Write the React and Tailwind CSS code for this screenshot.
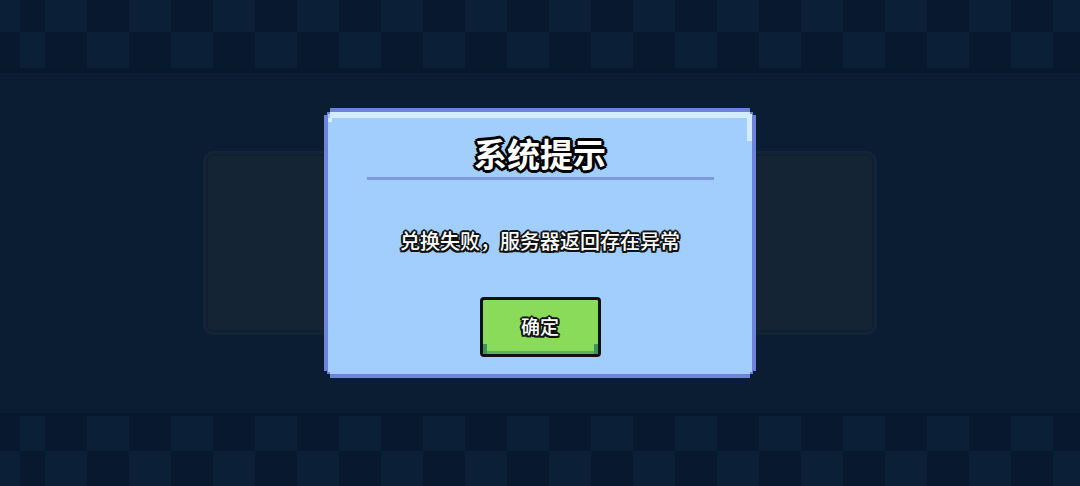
import React from "react";

const LIGHT = "bg-[#0b2037]";
const DARK = "bg-[#08182e]";

// column widths of the checker strip (first two are partial)
const cols = [20, 25, ...Array(24).fill(42)];

const CheckerRow = ({ startLight, h }) => {
  return (
    <div className={`flex w-full ${h}`}>
      {cols.map((w, i) => {
        const light = i % 2 === 0 ? startLight : !startLight;
        return (
          <div
            key={i}
            className={`h-full shrink-0 ${light ? LIGHT : DARK}`}
            style={{ width: w }}
          />
        );
      })}
      <div className={`h-full flex-1 ${startLight ? LIGHT : DARK}`} />
    </div>
  );
};

const outline3 =
  "[text-shadow:3px_0_0_#000,-3px_0_0_#000,0_3px_0_#000,0_-3px_0_#000,2px_2px_0_#000,-2px_-2px_0_#000,2px_-2px_0_#000,-2px_2px_0_#000]";
const outline2 =
  "[text-shadow:2px_0_0_#111,-2px_0_0_#111,0_2px_0_#111,0_-2px_0_#111,1.5px_1.5px_0_#111,-1.5px_-1.5px_0_#111,1.5px_-1.5px_0_#111,-1.5px_1.5px_0_#111]";

const Dialog = () => {
  return (
    <div className="fixed inset-0 flex items-center justify-center">
      <div className="relative w-[432px] h-[270px] bg-[#6d83dc] p-[4px]">
        {/* pixel corner cuts */}
        <div className="absolute left-0 top-0 w-[6px] h-[4px] bg-[#0b1d33]" />
        <div className="absolute left-0 top-0 w-[3px] h-[7px] bg-[#0b1d33]" />
        <div className="absolute right-0 top-0 w-[6px] h-[4px] bg-[#0b1d33]" />
        <div className="absolute right-0 top-0 w-[3px] h-[7px] bg-[#0b1d33]" />
        <div className="absolute left-0 bottom-0 w-[6px] h-[4px] bg-[#0b1d33]" />
        <div className="absolute left-0 bottom-0 w-[3px] h-[7px] bg-[#0b1d33]" />
        <div className="absolute right-0 bottom-0 w-[6px] h-[4px] bg-[#0b1d33]" />
        <div className="absolute right-0 bottom-0 w-[3px] h-[7px] bg-[#0b1d33]" />

        <div className="relative w-full h-full bg-[#a1cefc] flex flex-col items-center font-['Noto_Sans_CJK_SC','Noto_Sans',sans-serif]">
          {/* highlights */}
          <div className="absolute left-[2px] right-[4px] top-0 h-[6px] bg-[#d5ebff]" />
          <div className="absolute left-0 top-[6px] w-[4px] h-[4px] bg-[#d5ebff]" />
          <div className="absolute right-0 top-0 w-[5px] h-[29px] bg-[#d5ebff]" />
          <div className="absolute left-0 top-0 w-[2px] h-[2px] bg-[#6d83dc]" />
          <div className="absolute right-0 top-0 w-[2px] h-[2px] bg-[#6d83dc]" />
          <div className="absolute left-0 bottom-0 w-[2px] h-[2px] bg-[#6d83dc]" />
          <div className="absolute right-0 bottom-0 w-[2px] h-[2px] bg-[#6d83dc]" />

          <h2
            className={`mt-[23px] text-[33px] leading-[37px] font-bold text-white ${outline3}`}
          >
            系统提示
          </h2>
          <div className="mt-[5px] w-[347px] h-[3px] bg-[#7f98e4]" />
          <p
            className={`mt-[47px] text-[20px] leading-[28px] font-medium text-white ${outline2}`}
          >
            兑换失败，服务器返回存在异常
          </p>
          <button className="relative mt-[42px] w-[121px] h-[60px] rounded-[4px] border-[3px] border-[#111] bg-[#8bdb5a] flex items-center justify-center pb-[3px]">
            <div className="absolute left-0 right-0 bottom-0 h-[3px] bg-[#5fb25b]" />
            <div className="absolute left-0 bottom-0 w-[4px] h-[10px] bg-[#3d9463]" />
            <div className="absolute right-0 bottom-0 w-[4px] h-[10px] bg-[#3d9463]" />
            <span
              className={`relative text-[19px] leading-[24px] font-medium text-white ${outline2}`}
            >
              确定
            </span>
          </button>
        </div>
      </div>
    </div>
  );
};

const App = () => {
  return (
    <div className="relative w-full h-[486px] overflow-hidden bg-[#0b1d33] flex flex-col">
      {/* top checker band */}
      <div className="flex flex-col shrink-0">
        <CheckerRow startLight={true} h="h-[32px]" />
        <CheckerRow startLight={false} h="h-[36px]" />
        <div className="h-[5px] bg-[#08172c]" />
      </div>

      {/* middle area with panel */}
      <div className="flex-1 flex items-center justify-center">
        <div className="w-[674px] h-[184px] rounded-[10px] border-[3px] border-[#13243a] bg-[#142434] shadow-[inset_0_0_0_2px_#11202f]" />
      </div>

      {/* bottom checker band */}
      <div className="flex flex-col shrink-0">
        <div className="h-[3px] bg-[#08172c]" />
        <CheckerRow startLight={false} h="h-[35px]" />
        <CheckerRow startLight={true} h="h-[35px]" />
      </div>

      <Dialog />
    </div>
  );
};

export default App;
